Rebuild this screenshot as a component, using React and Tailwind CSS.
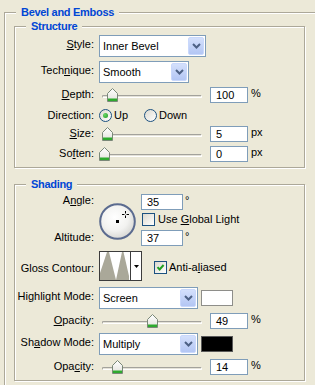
import React from 'react';

// Photoshop "Bevel and Emboss" layer style panel, XP look

function GroupBox({ title, className = '', children }) {
  return (
    <div className={`border border-[#aca899] shadow-[inset_1px_1px_0_#fff,1px_1px_0_#fff] ${className}`}>
      <div className="-mt-[7px] ml-[11px] w-fit bg-[#ece9d8] px-[5px] text-[11px] font-bold leading-[13px] tracking-[-0.3px] text-[#0046d5]">
        {title}
      </div>
      {children}
    </div>
  );
}

function Label({ children, className = '' }) {
  return <span className={`w-[79px] shrink-0 text-right leading-[13px] whitespace-nowrap ${className}`}>{children}</span>;
}

function Chevron() {
  return (
    <svg width="9" height="6" viewBox="0 0 9 6">
      <path d="M1 1 L4.5 4.5 L8 1" fill="none" stroke="#4d6185" strokeWidth="2" />
    </svg>
  );
}

function Select({ value, className }) {
  return (
    <div className={`flex h-[22px] shrink-0 items-stretch border border-[#7f9db9] bg-white p-[1px] ${className}`}>
      <span className="flex flex-1 items-center pl-[2px] leading-[13px]">{value}</span>
      <span className="flex w-[16px] items-center justify-center rounded-[2px] border border-[#c9d8fc] bg-[linear-gradient(180deg,#d4e0fc,#b3c6f4)]">
        <Chevron />
      </span>
    </div>
  );
}

function Field({ value, className = 'w-[38px]' }) {
  return (
    <div className={`flex h-[16px] shrink-0 items-center border border-[#7f9db9] bg-white pl-[5px] leading-[13px] ${className}`}>
      {value}
    </div>
  );
}

function Slider({ pos }) {
  return (
    <div className="relative h-[16px] w-[106px] shrink-0">
      <div className="absolute left-[3px] right-[3px] top-[8px] h-[3px] rounded-full border border-[#a3a29c] border-b-white border-r-white bg-[#e4e2d8]" />
      <svg className="absolute top-[1px]" style={{ left: pos }} width="11" height="14" viewBox="0 0 11 14">
        <defs>
          <linearGradient id="thumb" x1="0" y1="0" x2="0" y2="1">
            <stop offset="0" stopColor="#ffffff" />
            <stop offset="1" stopColor="#e3e2dc" />
          </linearGradient>
        </defs>
        <polygon points="0.5,5.5 5.5,0.5 10.5,5.5 10.5,13.5 0.5,13.5" fill="url(#thumb)" stroke="#7a8878" />
        <rect x="1" y="10.5" width="9" height="2.5" fill="#2eaa2e" />
      </svg>
    </div>
  );
}

function Radio({ checked }) {
  return (
    <span className="flex h-[13px] w-[13px] shrink-0 items-center justify-center rounded-full border border-[#1c5180] bg-[linear-gradient(135deg,#dcd9cf,#ffffff)]">
      {checked && <span className="h-[5px] w-[5px] rounded-full bg-[radial-gradient(circle_at_35%_35%,#6ad66a,#1e9a1e)]" />}
    </span>
  );
}

function Checkbox({ checked }) {
  return (
    <span className="flex h-[13px] w-[13px] shrink-0 items-center justify-center border border-[#1c5180] bg-[linear-gradient(135deg,#dcd9cf,#ffffff)]">
      {checked && (
        <svg width="9" height="9" viewBox="0 0 9 9">
          <path d="M1.5 4.2 L3.6 6.5 L7.6 2" fill="none" stroke="#21a121" strokeWidth="2" />
        </svg>
      )}
    </span>
  );
}

function SliderRow({ label, pos, value, unit, className = 'mt-[4px]' }) {
  return (
    <div className={`flex items-start ${className}`}>
      <Label className="mt-[1px]">{label}</Label>
      <div className="ml-[5px] flex items-start">
        <Slider pos={pos} />
        <Field value={value} className="ml-[5px] w-[38px]" />
        <span className="ml-[3px] leading-[13px]">{unit}</span>
      </div>
    </div>
  );
}

function AngleDial() {
  return (
    <svg className="ml-[5px] mt-[9px] shrink-0" width="37" height="37" viewBox="0 0 37 37">
      <defs>
        <radialGradient id="dial" cx="0.42" cy="0.38" r="0.65">
          <stop offset="0" stopColor="#ffffff" />
          <stop offset="0.6" stopColor="#f2f2f0" />
          <stop offset="1" stopColor="#d6d6d2" />
        </radialGradient>
      </defs>
      <circle cx="18.5" cy="18.5" r="17.3" fill="url(#dial)" stroke="#5b6b8f" strokeWidth="2" />
      <rect x="17" y="17" width="3" height="3" fill="#000" />
      <path d="M23 11.5 H25.5 M27.5 11.5 H30 M26.5 8 V10.5 M26.5 12.5 V15" stroke="#000" strokeWidth="1" />
    </svg>
  );
}

function ContourPicker() {
  return (
    <div className="flex h-[30px] w-[43px] shrink-0 border border-[#3c3c3c] bg-white">
      <svg width="30" height="28" viewBox="0 0 30 28">
        <polygon points="0,28 0,21 7,0 9,0 16,28 22,0 23.5,0 29,24 29,28" fill="#aaa899" />
      </svg>
      <div className="flex flex-1 items-center justify-center border-l border-[#3c3c3c]">
        <svg width="5" height="3" viewBox="0 0 5 3">
          <polygon points="0,0 5,0 2.5,3" fill="#000" />
        </svg>
      </div>
    </div>
  );
}

export default function App() {
  return (
    <div className="h-[385px] w-[315px] overflow-hidden bg-[#ece9d8] pt-[12px] pl-[4px] text-[11px] text-black [font-family:'Liberation_Sans',Arial,sans-serif]">
      <GroupBox title="Bevel and Emboss" className="w-[340px] pb-[20px]">
        {/* Structure */}
        <GroupBox title="Structure" className="ml-[9px] mt-[7px] w-[291px] pb-[5px]">
          <div className="mt-[2px] flex items-start">
            <Label className="mt-[3px]"><u>S</u>tyle:</Label>
            <Select value="Inner Bevel" className="ml-[5px] w-[107px]" />
          </div>
          <div className="mt-[4px] flex items-start">
            <Label className="mt-[3px]">Tech<u>n</u>ique:</Label>
            <Select value="Smooth" className="ml-[5px] w-[90px]" />
          </div>
          <SliderRow label={<><u>D</u>epth:</>} pos={8} value="100" unit="%" />
          <div className="mt-[6px] flex items-center">
            <Label>Direction:</Label>
            <div className="ml-[5px] flex items-center">
              <Radio checked />
              <span className="ml-[2px] leading-[13px]">Up</span>
              <span className="ml-[16px]"><Radio /></span>
              <span className="ml-[2px] leading-[13px]">Down</span>
            </div>
          </div>
          <SliderRow label={<><u>S</u>ize:</>} pos={3} value="5" unit="px" />
          <SliderRow label={<>So<u>f</u>ten:</>} pos={0} value="0" unit="px" />
        </GroupBox>

        {/* Shading */}
        <GroupBox title="Shading" className="ml-[9px] mt-[16px] w-[291px] pb-[5px]">
          <div className="mt-[3px] flex items-start">
            <div className="flex w-[79px] shrink-0 flex-col">
              <Label>A<u>n</u>gle:</Label>
              <Label className="mt-[24px]">Altitude:</Label>
            </div>
            <AngleDial />
            <div className="ml-[5px] flex flex-col">
              <div className="flex items-start">
                <Field value="35" className="w-[42px]" />
                <span className="ml-[2px] leading-[13px]">°</span>
              </div>
              <div className="mt-[3px] flex items-center">
                <span className="ml-[1px]"><Checkbox /></span>
                <span className="ml-[3px] leading-[13px]">Use <u>G</u>lobal Light</span>
              </div>
              <div className="mt-[4px] flex items-start">
                <Field value="37" className="w-[42px]" />
                <span className="ml-[2px] leading-[13px]">°</span>
              </div>
            </div>
          </div>

          <div className="mt-[5px] flex items-start">
            <Label className="mt-[11px]">Gloss Contour:</Label>
            <div className="ml-[5px] flex items-start">
              <ContourPicker />
              <div className="ml-[12px] mt-[10px] flex items-center">
                <Checkbox checked />
                <span className="ml-[2px] leading-[13px]">Anti-a<u>l</u>iased</span>
              </div>
            </div>
          </div>

          <div className="mt-[6px] flex items-start">
            <Label className="mt-[3px]">Hi<u>g</u>hlight Mode:</Label>
            <div className="ml-[5px] flex items-start">
              <Select value="Screen" className="w-[99px]" />
              <div className="ml-[3px] mt-[3px] h-[16px] w-[32px] border border-[#8e8e8a] bg-white" />
            </div>
          </div>
          <SliderRow label={<><u>O</u>pacity:</>} pos={48} value="49" unit="%" />

          <div className="mt-[4px] flex items-start">
            <Label className="mt-[3px]">Sh<u>a</u>dow Mode:</Label>
            <div className="ml-[5px] flex items-start">
              <Select value="Multiply" className="w-[99px]" />
              <div className="ml-[3px] mt-[3px] h-[16px] w-[32px] border border-[#5a5a5a] bg-black" />
            </div>
          </div>
          <SliderRow label={<>Opa<u>c</u>ity:</>} pos={13} value="14" unit="%" />
        </GroupBox>
      </GroupBox>
    </div>
  );
}
